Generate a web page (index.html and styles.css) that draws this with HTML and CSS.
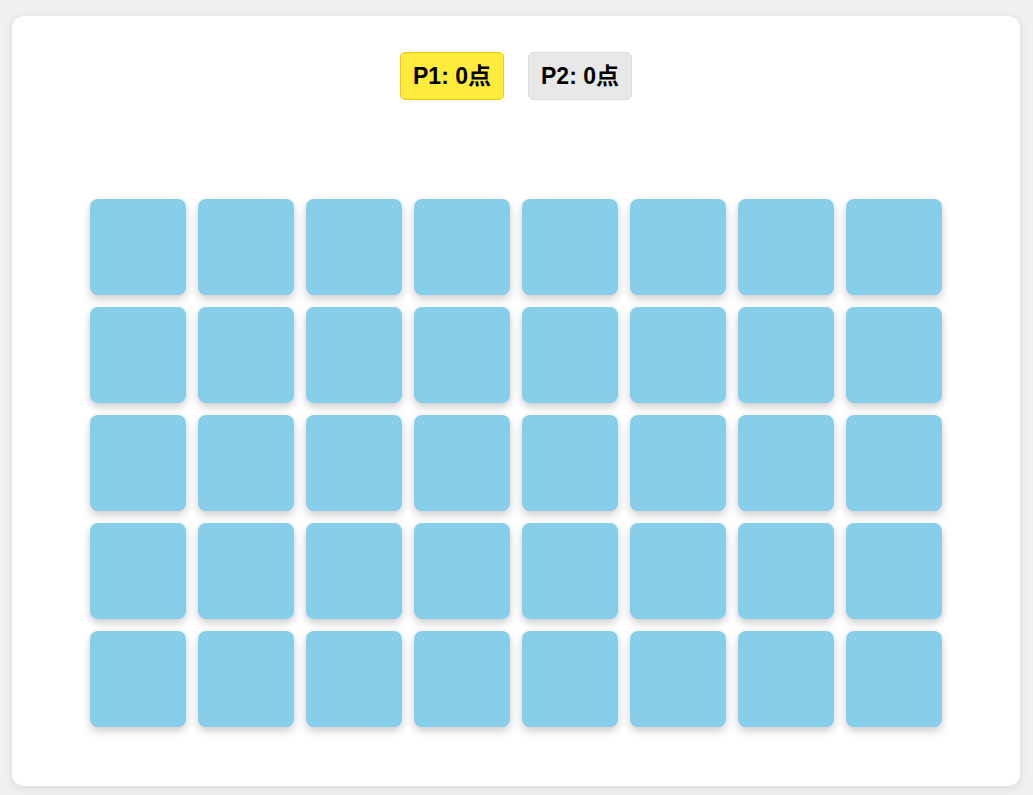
FILE: index.html
```html
<!DOCTYPE html>
<html lang="ja">
<head>
<meta charset="utf-8">
<title>Memory</title>
<link rel="stylesheet" href="styles.css">
</head>
<body>
<div class="game">
  <div class="scores">
    <div class="score active">P1: 0点</div>
    <div class="score">P2: 0点</div>
  </div>
  <div class="board">
    <div class="card"></div><div class="card"></div><div class="card"></div><div class="card"></div>
    <div class="card"></div><div class="card"></div><div class="card"></div><div class="card"></div>
    <div class="card"></div><div class="card"></div><div class="card"></div><div class="card"></div>
    <div class="card"></div><div class="card"></div><div class="card"></div><div class="card"></div>
    <div class="card"></div><div class="card"></div><div class="card"></div><div class="card"></div>
    <div class="card"></div><div class="card"></div><div class="card"></div><div class="card"></div>
    <div class="card"></div><div class="card"></div><div class="card"></div><div class="card"></div>
    <div class="card"></div><div class="card"></div><div class="card"></div><div class="card"></div>
    <div class="card"></div><div class="card"></div><div class="card"></div><div class="card"></div>
    <div class="card"></div><div class="card"></div><div class="card"></div><div class="card"></div>
  </div>
</div>
</body>
</html>
```
FILE: styles.css
```css
html, body {
  margin: 0;
  padding: 0;
}
body {
  background: #f0f0f0;
  font-family: "Liberation Sans", "Noto Sans CJK JP", Arial, sans-serif;
  padding: 16px 13px 9px 12px;
}
.game {
  background: #ffffff;
  border-radius: 12px;
  box-shadow: 0 2px 10px rgba(0, 0, 0, 0.1);
  height: 770px;
  box-sizing: border-box;
  padding-top: 36px;
  display: flex;
  flex-direction: column;
  align-items: center;
}
.scores {
  display: flex;
  gap: 24px;
  justify-content: center;
}
.score {
  font-size: 23px;
  font-weight: bold;
  line-height: 26px;
  padding: 10px 12px;
  border-radius: 5px;
  background: #e8e8e8;
  border: 1px solid #dcdcdc;
  color: #000;
}
.score.active {
  background: #ffeb3b;
  border-color: #f0c419;
}
.board {
  margin-top: 99px;
  display: grid;
  grid-template-columns: repeat(8, 96px);
  grid-auto-rows: 96px;
  gap: 12px;
}
.card {
  background: #87ceeb;
  border-radius: 8px;
  box-shadow: 0 4px 8px rgba(0, 0, 0, 0.2);
}
```
